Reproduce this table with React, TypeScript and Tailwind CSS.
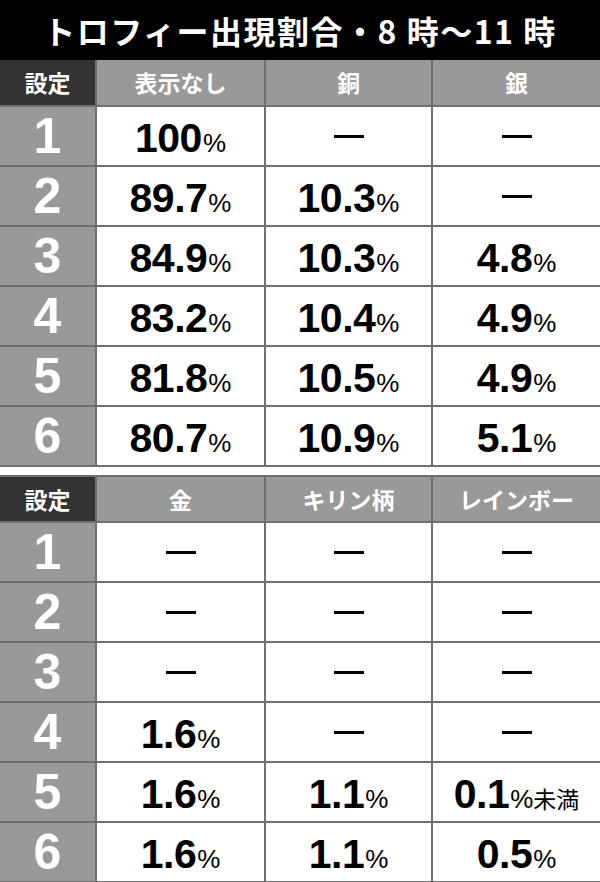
import React from "react";

type Cell = { v: string | null; note?: string };

const table1 = {
  heads: ["表示なし", "銅", "銀"],
  rows: [
    [{ v: "100" }, { v: null }, { v: null }],
    [{ v: "89.7" }, { v: "10.3" }, { v: null }],
    [{ v: "84.9" }, { v: "10.3" }, { v: "4.8" }],
    [{ v: "83.2" }, { v: "10.4" }, { v: "4.9" }],
    [{ v: "81.8" }, { v: "10.5" }, { v: "4.9" }],
    [{ v: "80.7" }, { v: "10.9" }, { v: "5.1" }],
  ] as Cell[][],
};

const table2 = {
  heads: ["金", "キリン柄", "レインボー"],
  rows: [
    [{ v: null }, { v: null }, { v: null }],
    [{ v: null }, { v: null }, { v: null }],
    [{ v: null }, { v: null }, { v: null }],
    [{ v: "1.6" }, { v: null }, { v: null }],
    [{ v: "1.6" }, { v: "1.1" }, { v: "0.1", note: "未満" }],
    [{ v: "1.6" }, { v: "1.1" }, { v: "0.5" }],
  ] as Cell[][],
};

const jp = "font-['Noto_Sans_CJK_JP','Noto_Sans',sans-serif]";
const num = "font-['Liberation_Sans',Arial,sans-serif]";

function Value({ cell }: { cell: Cell }) {
  if (!cell.v) {
    return <div className="w-[30px] h-[3px] bg-black" />;
  }
  return (
    <div className="flex items-baseline text-black pt-[5px]">
      <span className={`${num} text-[41px] font-bold leading-none tracking-[-0.5px]`}>{cell.v}</span>
      <span className={`${num} text-[26px] leading-none ml-[1px]`}>%</span>
      {cell.note && <span className={`${jp} text-[23px] leading-none`}>{cell.note}</span>}
    </div>
  );
}

function Table({ heads, rows, top }: { heads: string[]; rows: Cell[][]; top?: boolean }) {
  return (
    <div
      className={`grid grid-cols-[95px_167px_165px_1fr] gap-[2px] bg-[#6e6e6e] border-b-2 border-[#6e6e6e] ${
        top ? "border-t-2 grid-rows-[44px_repeat(6,58px)]" : "grid-rows-[45px_repeat(6,58px)]"
      }`}
    >
      <div className={`${jp} bg-[#333333] flex items-center justify-center text-white text-[23px] font-bold`}>
        設定
      </div>
      {heads.map((h) => (
        <div key={h} className={`${jp} bg-[#999999] flex items-center justify-center text-white text-[23px] font-bold`}>
          {h}
        </div>
      ))}
      {rows.map((r, i) => (
        <React.Fragment key={i}>
          <div className={`${num} bg-[#999999] flex items-center justify-center text-white text-[50px] font-bold leading-none`}>
            {i + 1}
          </div>
          {r.map((c, j) => (
            <div key={j} className="bg-white flex items-center justify-center">
              <Value cell={c} />
            </div>
          ))}
        </React.Fragment>
      ))}
    </div>
  );
}

export default function App() {
  return (
    <div className="w-[600px] h-[882px] bg-white overflow-hidden">
      <div className={`${jp} h-[60px] bg-black flex items-center justify-center text-white text-[32px] font-bold tracking-[1.5px]`}>
        トロフィー出現割合・8 時〜11 時
      </div>
      <Table heads={table1.heads} rows={table1.rows} />
      <div className="h-[8px] bg-white" />
      <Table heads={table2.heads} rows={table2.rows} top />
    </div>
  );
}
